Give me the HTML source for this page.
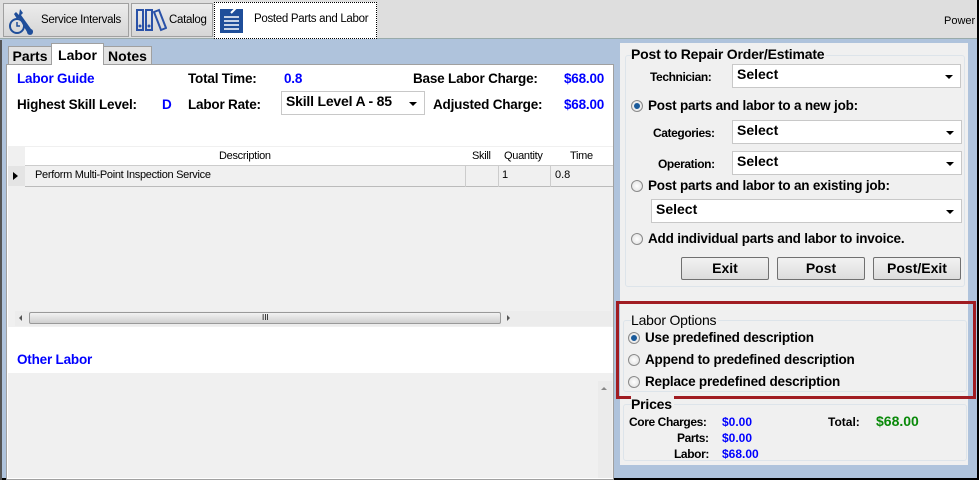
<!DOCTYPE html>
<html><head><style>
*{margin:0;padding:0;box-sizing:border-box}
body{width:979px;height:480px;overflow:hidden;background:#afc3dc;font-family:"Liberation Sans",Arial,sans-serif;position:relative;font-size:13px}
.a{position:absolute;white-space:nowrap}
.b{font-weight:bold}
.blue{color:#0000ff}
.t{font-size:13.5px;letter-spacing:-0.2px}
.sel{position:absolute;background:#fff;border:1px solid #c8c8c8;font-weight:bold;font-size:14px;padding:1px 4px;height:24px;white-space:nowrap}
.sel:after{content:"";position:absolute;right:7px;top:10px;border-left:4px solid transparent;border-right:4px solid transparent;border-top:4px solid #000}
.radio{position:absolute;width:12px;height:12px;border-radius:50%;border:1px solid #8a8a8a;background:radial-gradient(circle,#fff,#ddd)}
.radio.on:after{content:"";position:absolute;left:2px;top:2px;width:6px;height:6px;border-radius:50%;background:#1a5a9a}
.btn{position:absolute;height:23px;border:1px solid #707070;border-radius:2px;background:linear-gradient(#f2f2f2,#dcdcdc);font-weight:bold;font-size:14px;text-align:center;line-height:21px}
.grp{position:absolute;border:1px solid #dde4ea;border-radius:3px}
.gt{position:absolute;background:#f0f0f0;font-size:14px;font-weight:bold;padding-right:2px;letter-spacing:-0.2px;white-space:nowrap}
.tab{position:absolute;background:#e2e2e2;border:1px solid #a0a0a0;border-bottom:none;font-weight:bold;font-size:14px;text-align:center}
</style></head><body>
<div class="a" style="left:0;top:0;width:979px;height:39px;background:#dedede;border-bottom:1px solid #9aa;"></div>
<div class="a" style="left:3px;top:3px;width:126px;height:34px;background:linear-gradient(#ececec,#d6d6d6);border:1px solid #a0a0a0"></div>
<svg class="a" style="left:8px;top:6px" width="30" height="30" viewBox="0 0 30 30"><circle cx="9" cy="20" r="7" fill="none" stroke="#1f4e9a" stroke-width="2"/><path d="M9 16v4h3" stroke="#1f4e9a" stroke-width="1.5" fill="none"/><path d="M12 3l3 4 -2 2 10 14a3 3 0 1 1-4 3L11 12 9 13 6 8 8 6l3 3z" fill="#1f4e9a"/></svg>
<div class="a" style="left:41px;top:14px;font-size:11.5px;letter-spacing:-0.3px">Service Intervals</div>
<div class="a" style="left:131px;top:3px;width:82px;height:34px;background:linear-gradient(#ececec,#d6d6d6);border:1px solid #a0a0a0"></div>
<svg class="a" style="left:135px;top:8px" width="32" height="26" viewBox="0 0 32 26"><rect x="2" y="2" width="6" height="20" fill="none" stroke="#2a52a8" stroke-width="2"/><rect x="11" y="2" width="6" height="20" fill="none" stroke="#2a52a8" stroke-width="2"/><path d="M19 4l5-2 7 18-5 2z" fill="none" stroke="#2a52a8" stroke-width="2"/><circle cx="5" cy="18" r="1.5" fill="#2a52a8"/><circle cx="14" cy="18" r="1.5" fill="#2a52a8"/></svg>
<div class="a" style="left:169px;top:14px;font-size:11.5px;letter-spacing:-0.3px">Catalog</div>
<div class="a" style="left:214px;top:2px;width:163px;height:37px;background:#fff;border:1px dotted #000"></div>
<svg class="a" style="left:219px;top:5px" width="26" height="30" viewBox="0 0 26 30"><rect x="1" y="4" width="23" height="24" fill="#1f4e9a"/><path d="M5 12h15M5 16h15M5 20h15M5 24h15" stroke="#fff" stroke-width="1.5"/><path d="M12 8l6-6" stroke="#fff" stroke-width="2"/></svg>
<div class="a" style="left:254px;top:13px;font-size:11.5px;letter-spacing:-0.3px">Posted Parts and Labor</div>
<div class="a" style="left:944px;top:15px;font-size:11px">Power</div>
<div class="a" style="left:977px;top:0;width:2px;height:480px;background:#000"></div>
<div class="a" style="left:0;top:478px;width:979px;height:2px;background:#000"></div>
<div class="a" style="left:0;top:40px;width:2px;height:440px;background:#555"></div>

<div class="tab" style="left:8px;top:46px;width:44px;height:19px;line-height:19px">Parts</div>
<div class="tab" style="left:51px;top:43px;width:53px;height:22px;line-height:22px;background:#fff;z-index:2">Labor</div>
<div class="tab" style="left:103px;top:46px;width:49px;height:19px;line-height:19px">Notes</div>
<div class="a" style="left:6px;top:64px;width:608px;height:416px;background:#fff;border:1px solid #a0a0a0"></div>
<div class="a b blue t" style="left:17px;top:71px">Labor Guide</div>
<div class="a b t" style="left:188px;top:71px">Total Time:</div>
<div class="a b blue t" style="left:284px;top:71px">0.8</div>
<div class="a b t" style="left:413px;top:71px">Base Labor Charge:</div>
<div class="a b blue t" style="left:564px;top:71px">$68.00</div>
<div class="a b t" style="left:17px;top:97px">Highest Skill Level:</div>
<div class="a b blue t" style="left:162px;top:97px">D</div>
<div class="a b t" style="left:188px;top:97px">Labor Rate:</div>
<div class="sel t" style="left:281px;top:91px;width:144px;height:24px">Skill Level A - 85</div>
<div class="a b t" style="left:433px;top:97px">Adjusted Charge:</div>
<div class="a b blue t" style="left:564px;top:97px">$68.00</div>

<div class="a" style="left:8px;top:146px;width:605px;height:181px;background:#f0f0f0"></div>
<div class="a" style="left:25px;top:147px;width:588px;height:19px;background:#fff;border-bottom:1px solid #ccc"></div>
<div class="a" style="left:219px;top:150px;font-size:11px;letter-spacing:-0.3px">Description</div>
<div class="a" style="left:472px;top:150px;font-size:11px;letter-spacing:-0.3px">Skill</div>
<div class="a" style="left:504px;top:150px;font-size:11px;letter-spacing:-0.3px">Quantity</div>
<div class="a" style="left:570px;top:150px;font-size:11px;letter-spacing:-0.3px">Time</div>
<div class="a" style="left:8px;top:166px;width:17px;height:20px;background:#e4e4e4"></div>
<div class="a" style="left:13px;top:172px;border-top:4px solid transparent;border-bottom:4px solid transparent;border-left:5px solid #000"></div>
<div class="a" style="left:25px;top:166px;width:588px;height:21px;background:#f0f0f0;border-bottom:1px solid #bbb"></div>
<div class="a" style="left:465px;top:166px;width:1px;height:21px;background:#ccc"></div>
<div class="a" style="left:498px;top:166px;width:1px;height:21px;background:#ccc"></div>
<div class="a" style="left:550px;top:166px;width:1px;height:21px;background:#ccc"></div>
<div class="a" style="left:35px;top:169px;font-size:11px;letter-spacing:-0.3px">Perform Multi-Point Inspection Service</div>
<div class="a" style="left:502px;top:169px;font-size:11px">1</div>
<div class="a" style="left:555px;top:169px;font-size:11px">0.8</div>
<div class="a" style="left:15px;top:311px;width:596px;height:15px;background:#ececec"></div>
<div class="a" style="left:29px;top:312px;width:472px;height:12px;border:1px solid #999;border-radius:2px;background:linear-gradient(#f2f2f2,#cfcfcf)"></div>
<div class="a" style="left:262px;top:313px;font-size:8px">III</div>
<div class="a" style="left:19px;top:315px;border-top:3px solid transparent;border-bottom:3px solid transparent;border-right:3px solid #555"></div>
<div class="a" style="left:507px;top:315px;border-top:3px solid transparent;border-bottom:3px solid transparent;border-left:3px solid #555"></div>
<div class="a b blue t" style="left:17px;top:352px">Other Labor</div>
<div class="a" style="left:8px;top:373px;width:605px;height:105px;background:#f0f0f0"></div>
<div class="a" style="left:598px;top:381px;width:14px;height:97px;background:#ebebeb"></div>
<div class="a" style="left:601px;top:387px;border-left:3px solid transparent;border-right:3px solid transparent;border-bottom:3px solid #888"></div>

<div class="a" style="left:620px;top:43px;width:348px;height:422px;background:#f0f0f0"></div>
<div class="grp" style="left:625px;top:55px;width:340px;height:232px"></div>
<div class="gt" style="left:631px;top:46px">Post to Repair Order/Estimate</div>
<div class="a b" style="left:650px;top:70px;font-size:12px;letter-spacing:-0.4px">Technician:</div>
<div class="sel" style="left:732px;top:64px;width:229px">Select</div>
<div class="radio on" style="left:631px;top:100px"></div>
<div class="a b t" style="left:648px;top:98px">Post parts and labor to a new job:</div>
<div class="a b" style="left:653px;top:126px;font-size:12px;letter-spacing:-0.4px">Categories:</div>
<div class="sel" style="left:732px;top:120px;width:230px">Select</div>
<div class="a b" style="left:658px;top:157px;font-size:12px;letter-spacing:-0.4px">Operation:</div>
<div class="sel" style="left:732px;top:151px;width:230px">Select</div>
<div class="radio" style="left:631px;top:180px"></div>
<div class="a b t" style="left:648px;top:178px">Post parts and labor to an existing job:</div>
<div class="sel" style="left:651px;top:199px;width:311px">Select</div>
<div class="radio" style="left:631px;top:233px"></div>
<div class="a b t" style="left:648px;top:231px">Add individual parts and labor to invoice.</div>
<div class="btn" style="left:681px;top:257px;width:88px">Exit</div>
<div class="btn" style="left:777px;top:257px;width:88px">Post</div>
<div class="btn" style="left:873px;top:257px;width:88px">Post/Exit</div>

<div class="grp" style="left:623px;top:320px;width:344px;height:72px"></div>
<div class="gt" style="left:631px;top:312px;font-weight:normal">Labor Options</div>
<div class="radio on" style="left:628px;top:332px"></div>
<div class="a b t" style="left:645px;top:330px">Use predefined description</div>
<div class="radio" style="left:628px;top:354px"></div>
<div class="a b t" style="left:645px;top:352px">Append to predefined description</div>
<div class="radio" style="left:628px;top:376px"></div>
<div class="a b t" style="left:645px;top:374px">Replace predefined description</div>
<div class="a" style="left:616px;top:301px;width:360px;height:98px;border:3px solid #a01c22"></div>

<div class="grp" style="left:623px;top:404px;width:344px;height:57px"></div>
<div class="gt" style="left:631px;top:396px">Prices</div>
<div class="a b" style="left:629px;top:415px;font-size:12px;letter-spacing:-0.4px">Core Charges:</div>
<div class="a b blue" style="left:722px;top:415px;font-size:12px">$0.00</div>
<div class="a b" style="left:677px;top:431px;font-size:12px;letter-spacing:-0.4px">Parts:</div>
<div class="a b blue" style="left:722px;top:431px;font-size:12px">$0.00</div>
<div class="a b" style="left:674px;top:447px;font-size:12px;letter-spacing:-0.4px">Labor:</div>
<div class="a b blue" style="left:722px;top:447px;font-size:12px">$68.00</div>
<div class="a b" style="left:828px;top:415px;font-size:12px">Total:</div>
<div class="a b" style="left:876px;top:413px;font-size:14px;color:#0a8a0a">$68.00</div>
</body></html>
